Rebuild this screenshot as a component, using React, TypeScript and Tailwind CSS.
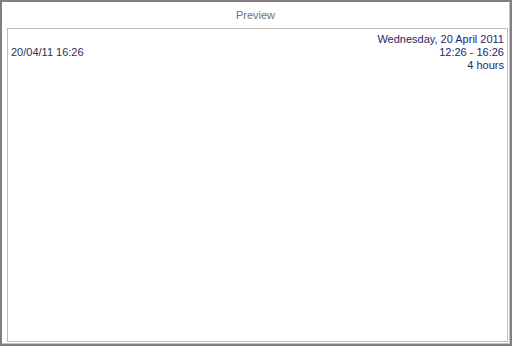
export default function App() {
  return (
    <div
      className="w-[512px] h-[346px] border-2 border-[#808080] bg-white text-[11px] leading-[13px]"
      style={{ fontFamily: '"Liberation Sans", Arial, sans-serif' }}
    >
      <div className="w-full h-full border-r border-b border-[#c4c4c4] flex flex-col">
        <div className="h-[26px] flex items-center justify-center text-[#707070] text-[11px]">
          Preview
        </div>
        <div className="flex-1 ml-[5px] mr-[1px] mb-[1px] border border-[#bcbcbc] px-[3px] pt-[4px]">
          <div className="flex items-center justify-between">
            <div className="text-[#2e2e58]">20/04/11 16:26</div>
            <div className="flex flex-col items-end text-[#26266c]">
              <div>Wednesday, 20 April 2011</div>
              <div>12:26 - 16:26</div>
              <div>4 hours</div>
            </div>
          </div>
        </div>
      </div>
    </div>
  );
}
